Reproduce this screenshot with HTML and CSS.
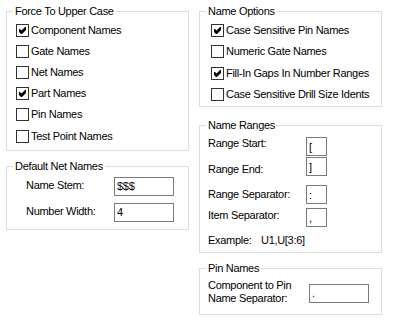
FILE: index.html
```html
<!DOCTYPE html>
<html lang="en">
<head>
    <meta charset="UTF-8">
    <title>Name Options</title>
    <link rel="stylesheet" href="styles.css">
</head>
<body>
    <div class="dialog">
        <!-- Left Column -->
        <div class="column">
            <fieldset class="group">
                <legend>Force To Upper Case</legend>
                <div class="check-list">
                    <label class="check"><span class="box"><svg width="11" height="11" viewBox="0 0 11 11"><polygon points="2,4 3,4 4.5,5.5 8,2 9,2 9,5 5,9 4,9 2,7"/></svg></span>Component Names</label>
                    <label class="check"><span class="box"></span>Gate Names</label>
                    <label class="check"><span class="box"></span>Net Names</label>
                    <label class="check"><span class="box"><svg width="11" height="11" viewBox="0 0 11 11"><polygon points="2,4 3,4 4.5,5.5 8,2 9,2 9,5 5,9 4,9 2,7"/></svg></span>Part Names</label>
                    <label class="check"><span class="box"></span>Pin Names</label>
                    <label class="check"><span class="box"></span>Test Point Names</label>
                </div>
            </fieldset>

            <fieldset class="group net-group">
                <legend>Default Net Names</legend>
                <div class="field-list">
                    <div class="field">
                        <span class="field-label">Name Stem:</span>
                        <input class="text-box" type="text" value="$$$">
                    </div>
                    <div class="field">
                        <span class="field-label">Number Width:</span>
                        <input class="text-box" type="text" value="4">
                    </div>
                </div>
            </fieldset>
        </div>

        <!-- Right Column -->
        <div class="column">
            <fieldset class="group names-group">
                <legend>Name Options</legend>
                <div class="check-list">
                    <label class="check"><span class="box"><svg width="11" height="11" viewBox="0 0 11 11"><polygon points="2,4 3,4 4.5,5.5 8,2 9,2 9,5 5,9 4,9 2,7"/></svg></span>Case Sensitive Pin Names</label>
                    <label class="check"><span class="box"></span>Numeric Gate Names</label>
                    <label class="check"><span class="box"><svg width="11" height="11" viewBox="0 0 11 11"><polygon points="2,4 3,4 4.5,5.5 8,2 9,2 9,5 5,9 4,9 2,7"/></svg></span>Fill-In Gaps In Number Ranges</label>
                    <label class="check"><span class="box"></span>Case Sensitive Drill Size Idents</label>
                </div>
            </fieldset>

            <fieldset class="group ranges-group">
                <legend>Name Ranges</legend>
                <div class="range-list">
                    <div class="range">
                        <span class="range-label">Range Start:</span>
                        <input class="text-box small" type="text" value="[">
                    </div>
                    <div class="range range-end">
                        <span class="range-label">Range End:</span>
                        <input class="text-box small" type="text" value="]">
                    </div>
                    <div class="range range-sep">
                        <span class="range-label">Range Separator:</span>
                        <input class="text-box small" type="text" value=":">
                    </div>
                    <div class="range range-item">
                        <span class="range-label">Item Separator:</span>
                        <input class="text-box small" type="text" value=",">
                    </div>
                    <div class="example">
                        <span class="example-label">Example:</span>
                        <span>U1,U[3:6]</span>
                    </div>
                </div>
            </fieldset>

            <fieldset class="group pin-group">
                <legend>Pin Names</legend>
                <div class="pin-row">
                    <span class="pin-label">Component to Pin<br>Name Separator:</span>
                    <input class="text-box" type="text" value=".">
                </div>
            </fieldset>
        </div>
    </div>
</body>
</html>
```

FILE: styles.css
```css
/* General */
body {
    margin: 0;
    font-family: "Liberation Sans", Arial, sans-serif;
    font-size: 11px;
    line-height: 13px;
    letter-spacing: -0.3px;
    color: #000;
    background: #fff;
}

.dialog {
    display: flex;
    gap: 10px;
    padding: 5px 0 0 6px;
}

.column {
    display: flex;
    flex-direction: column;
    width: 183px;
}

/* Group Boxes */
.group {
    margin: 0;
    padding: 0;
    min-width: 0;
    border: 1px solid #dcdcdc;
}
.group legend {
    margin-left: 6px;
    padding: 0 2px;
    line-height: 13px;
}
.net-group {
    margin-top: 9px;
}
.ranges-group {
    margin-top: 12.5px;
}
.pin-group {
    margin-top: 9px;
}

/* Check Boxes */
.check-list {
    padding: 1.5px 0 3px 9px;
}
.check {
    display: flex;
    align-items: center;
    gap: 2px;
    height: 21.2px;
}
.names-group .check-list {
    padding: 1.8px 0 0.5px 11px;
}
.names-group .check {
    height: 21.4px;
}
.box {
    flex: none;
    box-sizing: border-box;
    width: 13px;
    height: 13px;
    border: 1px solid #333;
    background: #fff;
}
.box svg {
    display: block;
    fill: #000;
}

/* Text Boxes */
.text-box {
    box-sizing: border-box;
    width: 60px;
    height: 19px;
    margin: 0;
    padding: 0 2px;
    border: 1px solid #7a7a7a;
    border-radius: 0;
    background: #fff;
    font: inherit;
    letter-spacing: inherit;
    color: #000;
    outline: none;
}
.text-box.small {
    width: 21px;
}

/* Default Net Names */
.field-list {
    display: flex;
    flex-direction: column;
    gap: 7px;
    padding: 4px 0 7px 19px;
}
.field {
    display: flex;
    align-items: center;
    height: 19px;
}
.field-label {
    width: 88px;
    margin-top: -2px;
}

/* Name Ranges */
.range-list {
    padding: 5px 0 4.5px 8px;
}
.range {
    display: flex;
    align-items: flex-start;
}
.range-label {
    width: 98px;
}
.range-end {
    margin-top: 1px;
}
.range-end .range-label {
    padding-top: 6px;
}
.range-sep {
    margin-top: 9px;
}
.range-sep .range-label {
    padding-top: 3px;
}
.range-item {
    margin-top: 4px;
}
.range-item .range-label {
    padding-top: 1px;
}
.example {
    display: flex;
    margin-top: 7px;
}
.example-label {
    width: 53px;
}

/* Pin Names */
.pin-row {
    display: flex;
    align-items: flex-start;
    padding: 4px 0 9.5px 8px;
}
.pin-label {
    width: 101px;
}
.pin-row .text-box {
    margin-top: 5px;
}
```
